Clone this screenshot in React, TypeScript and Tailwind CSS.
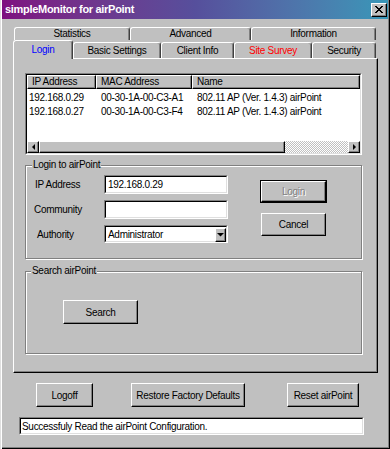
import type { ReactNode } from "react";

const raised =
  "border border-t-white border-l-white border-r-black border-b-black shadow-[inset_-1px_-1px_0_#808080] bg-[#c0c0c0]";

const Btn = ({ className = "", children }: { className?: string; children?: ReactNode }) => (
  <div className={`${raised} flex items-center justify-center ${className}`}>{children}</div>
);

const Sunken = ({ className = "", children }: { className?: string; children?: ReactNode }) => (
  <div className={`border border-t-[#808080] border-l-[#808080] border-r-white border-b-white ${className}`}>
    <div className="h-full w-full border border-t-black border-l-black border-r-[#dfdfdf] border-b-[#dfdfdf] bg-white flex flex-col">
      {children}
    </div>
  </div>
);

const Group = ({
  label,
  labelOffset,
  className = "",
  children,
}: {
  label: string;
  labelOffset: string;
  className?: string;
  children?: ReactNode;
}) => (
  <div className={`border border-[#808080] shadow-[inset_1px_1px_0_#fff,1px_1px_0_#fff] flex flex-col ${className}`}>
    <div className={`-mt-[7px] ${labelOffset} self-start px-[1px] bg-[#c0c0c0] h-[12px] leading-[12px]`}>{label}</div>
    {children}
  </div>
);

const Arrow = ({ dir }: { dir: "left" | "right" | "down" }) => {
  const pts = dir === "left" ? "4,1 4,7 1,4" : dir === "right" ? "1,1 1,7 4,4" : "1,2 8,2 4.5,5.5";
  const w = dir === "down" ? 9 : 5;
  return (
    <svg width={w} height="8" viewBox={`0 0 ${w} 8`}>
      <polygon points={pts} fill="#000" />
    </svg>
  );
};

const backTabs = [
  { label: "Statistics", w: "w-[116px]" },
  { label: "Advanced", w: "w-[121px]" },
  { label: "Information", w: "w-[125px]" },
];

const frontTabs = [
  { label: "Basic Settings", w: "w-[88px]", color: "" },
  { label: "Client Info", w: "w-[73px]", color: "" },
  { label: "Site Survey", w: "w-[78px]", color: "text-[#ff0000]" },
  { label: "Security", w: "w-[64px]", color: "" },
];

const tabCls =
  "border-t border-l border-r border-t-white border-l-white border-r-[#404040] rounded-t-[3px] shadow-[inset_-1px_0_0_#808080] flex justify-center bg-[#c0c0c0]";

const rows = [
  ["192.168.0.29", "00-30-1A-00-C3-A1", "802.11 AP (Ver. 1.4.3) airPoint"],
  ["192.168.0.27", "00-30-1A-00-C3-F4", "802.11 AP (Ver. 1.4.3) airPoint"],
];

export default function App() {
  return (
    <div className="w-[390px] h-[449px] overflow-hidden bg-[#c0c0c0] text-black font-['Liberation_Sans',Arial,sans-serif] text-[10px] tracking-[-0.3px] shadow-[inset_1px_0_0_#dfdfdf,inset_2px_0_0_#fff,inset_-1px_-1px_0_#000,inset_-2px_-2px_0_#808080]">
      {/* title bar */}
      <div className="mx-[2px] h-[19px] flex items-center justify-between pl-[3px] pr-[1px] bg-linear-to-r from-[#7e0f80] via-[#564f9c] to-[#3797b8]">
        <span className="text-white font-bold text-[11px]">simpleMonitor for airPoint</span>
        <div className={`${raised} w-[16px] h-[14px] flex items-center justify-center`}>
          <svg width="8" height="7" viewBox="0 0 8 7">
            <path d="M0 0h2v1h1v1h2V1h1V0h2v1H7v1H6v1H5v1h1v1h1v1h1v1H6V6H5V5H3v1H2v1H0V6h1V5h1V4h1V3H2V2H1V1H0z" fill="#000" />
          </svg>
        </div>
      </div>

      <div className="pl-[13px] pt-[8px]">
        {/* back row of tabs */}
        <div className="flex ml-[1px] h-[13px]">
          {backTabs.map((t) => (
            <div key={t.label} className={`${tabCls} ${t.w} leading-[12px]`}>
              {t.label}
            </div>
          ))}
        </div>
        {/* front row of tabs */}
        <div className="flex items-end h-[18px]">
          <div className={`${tabCls} w-[60px] h-[19px] -mb-[1px] relative z-10 items-center pb-[1px] text-[#0000ff]`}>
            Login
          </div>
          {frontTabs.map((t) => (
            <div key={t.label} className={`${tabCls} ${t.w} h-[16px] items-center pb-[1px] ${t.color}`}>
              {t.label}
            </div>
          ))}
        </div>

        {/* tab page */}
        <div className="w-[365px] h-[315px] border border-t-white border-l-white border-r-black border-b-black shadow-[inset_-1px_-1px_0_#808080] pl-[11px] pt-[14px]">
          <Sunken className="w-[337px] h-[82px]">
            <div className="flex h-[14px]">
              {[
                ["IP Address", "w-[69px]"],
                ["MAC Address", "w-[96px]"],
                ["Name", "flex-1"],
              ].map(([h, w]) => (
                <div key={h} className={`${raised} ${w} h-[14px] flex items-center pl-[4px] leading-none`}>
                  {h}
                </div>
              ))}
            </div>
            <div className="flex-1 pt-[1px]">
              {rows.map((r) => (
                <div key={r[0]} className="flex h-[14px] items-center">
                  <div className="w-[69px] pl-[2px]">{r[0]}</div>
                  <div className="w-[96px] pl-[5px]">{r[1]}</div>
                  <div className="flex-1 pl-[5px]">{r[2]}</div>
                </div>
              ))}
            </div>
            <div className="flex h-[12px]">
              <Btn className="w-[12px] h-[12px]">
                <Arrow dir="left" />
              </Btn>
              <Btn className="w-[246px] h-[12px]" />
              <div className="flex-1 bg-[repeating-conic-gradient(#c0c0c0_0%_25%,#fff_0%_50%)] bg-[length:2px_2px]" />
              <Btn className="w-[12px] h-[12px]">
                <Arrow dir="right" />
              </Btn>
            </div>
          </Sunken>

          <Group label="Login to airPoint" labelOffset="ml-[6px]" className="mt-[10px] w-[337px] h-[94px]">
            <div className="flex mt-[4px]">
              <div className="ml-[9px] flex flex-col gap-[6px]">
                <div className="flex items-center h-[19px]">
                  <div className="w-[69px]">IP Address</div>
                  <Sunken className="w-[124px] h-[19px]">
                    <div className="flex-1 flex items-center pl-[2px]">192.168.0.29</div>
                  </Sunken>
                </div>
                <div className="flex items-center h-[19px]">
                  <div className="w-[69px] -ml-[1px] pl-0">Community</div>
                  <Sunken className="w-[124px] h-[19px] ml-[1px]" />
                </div>
                <div className="flex items-center h-[18px]">
                  <div className="w-[69px] pl-[2px]">Authority</div>
                  <Sunken className="w-[124px] h-[18px]">
                    <div className="flex-1 flex items-center">
                      <div className="flex-1 pl-[2px]">Administrator</div>
                      <Btn className="w-[11px] h-[14px]">
                        <Arrow dir="down" />
                      </Btn>
                    </div>
                  </Sunken>
                </div>
              </div>
              <div className="ml-[32px] mt-[5px] flex flex-col">
                <div className="border border-black">
                  <Btn className="w-[65px] h-[21px] text-[#808080] [text-shadow:1px_1px_0_#fff]">Login</Btn>
                </div>
                <Btn className="mt-[10px] ml-[1px] w-[65px] h-[23px]">Cancel</Btn>
              </div>
            </div>
          </Group>

          <Group label="Search airPoint" labelOffset="ml-[5px]" className="mt-[12px] w-[337px] h-[83px]">
            <Btn className="mt-[23px] ml-[37px] w-[75px] h-[24px]">Search</Btn>
          </Group>
        </div>
      </div>

      {/* bottom buttons */}
      <div className="flex mt-[10px] h-[24px]">
        <Btn className="ml-[36px] w-[57px] h-[24px]">Logoff</Btn>
        <Btn className="ml-[38px] w-[114px] h-[24px]">Restore Factory Defaults</Btn>
        <Btn className="ml-[42px] w-[72px] h-[24px]">Reset airPoint</Btn>
      </div>
      <Sunken className="mt-[10px] ml-[19px] w-[345px] h-[18px]">
        <div className="flex-1 flex items-center pl-[1px]">Successfuly Read the airPoint Configuration.</div>
      </Sunken>
    </div>
  );
}
